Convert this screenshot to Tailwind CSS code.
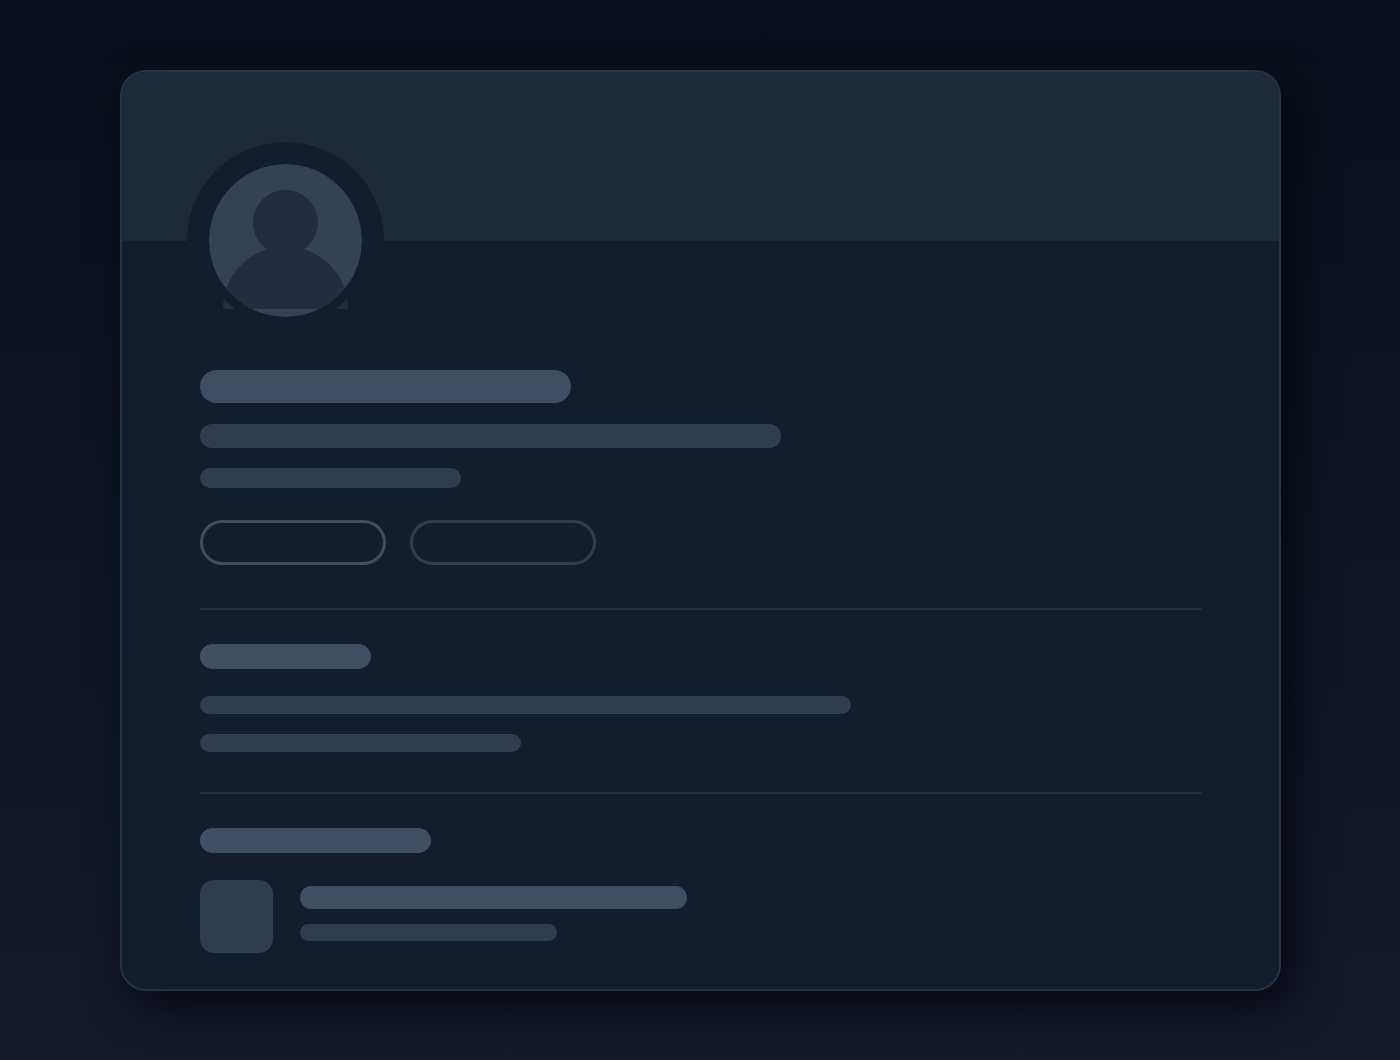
<!DOCTYPE html>
<html lang="en">
<head>
    <meta charset="UTF-8">
    <meta name="viewport" content="width=device-width, initial-scale=1.0">
    <title>Profile</title>
    <script src="https://cdn.jsdelivr.net/npm/@tailwindcss/browser@4"></script>
</head>
<body class="min-h-screen bg-linear-to-b from-[#09101b] to-[#13182b] px-[120px] pt-[70px] pb-[69px] font-sans">
    <main class="mr-[-1px] overflow-hidden rounded-[26px] border-2 border-[#253247] bg-[#141d2d] shadow-[12px_16px_44px_rgba(0,0,0,0.6)]" aria-busy="true">
        <!-- Cover -->
        <div class="h-[169px] bg-[#1d2839]"></div>

        <div class="px-[78px] pb-9">
            <!-- Avatar, half over the cover -->
            <svg class="relative -mt-[99px] -ml-[13px] size-[197px]" viewBox="0 0 197 197" aria-hidden="true">
                <circle cx="98.5" cy="98.5" r="98.5" fill="#141d2d"/>
                <circle cx="98.5" cy="98.5" r="76.5" fill="#354154"/>
                <circle cx="98.5" cy="80.5" r="32.5" fill="#242c3f"/>
                <path d="M36 167a62.5 62.5 0 0 1 125 0z" fill="#242c3f"/>
                <circle cx="98.5" cy="98.5" r="80.75" fill="none" stroke="#141d2d" stroke-width="8.5"/>
            </svg>

            <!-- Name and headline -->
            <div class="mt-[31px] h-[33px] w-[371px] max-w-full rounded-full bg-[#404e64]"></div>
            <div class="mt-[21px] h-6 w-[581px] max-w-full rounded-full bg-[#303c4f]"></div>
            <div class="mt-5 h-5 w-[261px] max-w-full rounded-full bg-[#303c4f]"></div>

            <div class="mt-8 flex gap-6">
                <button type="button" aria-label="Connect" class="h-[45px] w-[186px] rounded-full border-3 border-[#404e64]"></button>
                <button type="button" aria-label="Message" class="h-[45px] w-[186px] rounded-full border-3 border-[#303c4f]"></button>
            </div>

            <hr class="mt-[43px] border-t-2 border-[#253247]">

            <!-- About -->
            <section>
                <div class="mt-[34px] h-[25px] w-[171px] rounded-full bg-[#404e64]"></div>
                <div class="mt-[27px] h-[18px] w-[651px] max-w-full rounded-full bg-[#303c4f]"></div>
                <div class="mt-5 h-[18px] w-[321px] max-w-full rounded-full bg-[#303c4f]"></div>
            </section>

            <hr class="mt-10 border-t-2 border-[#253247]">

            <!-- Experience -->
            <section>
                <div class="mt-[34px] h-[25px] w-[231px] rounded-full bg-[#404e64]"></div>
                <div class="mt-[27px] flex gap-[27px]">
                    <div class="size-[73px] shrink-0 rounded-[14px] bg-[#303c4f]"></div>
                    <div class="min-w-0 flex-1 pt-[6px]">
                        <div class="h-[23px] w-[387px] max-w-full rounded-full bg-[#404e64]"></div>
                        <div class="mt-[15px] h-[17px] w-[257px] max-w-full rounded-full bg-[#303c4f]"></div>
                    </div>
                </div>
            </section>
        </div>
    </main>
</body>
</html>
